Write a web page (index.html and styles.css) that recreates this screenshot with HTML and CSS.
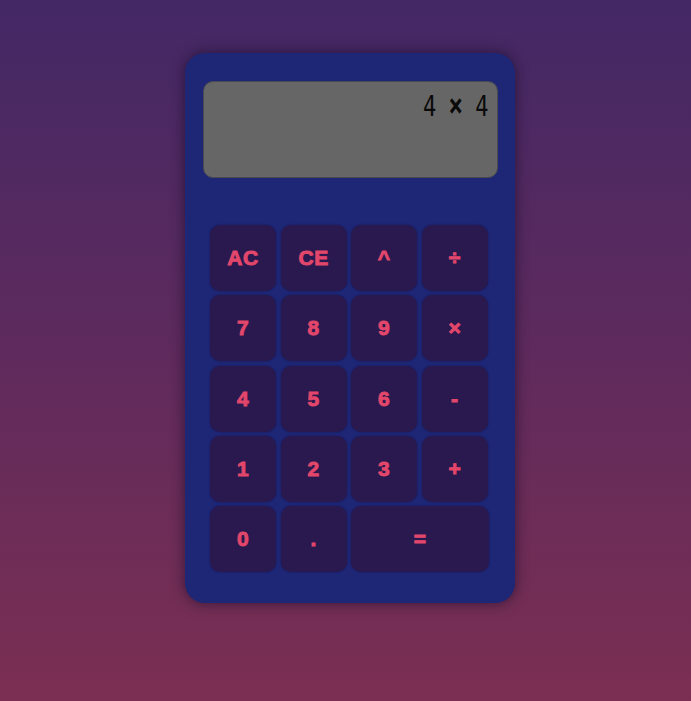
FILE: index.html
```html
<!DOCTYPE html>
<html>
<head>
<meta charset="utf-8">
<link rel="stylesheet" href="styles.css">
</head>
<body>
<div class="calc">
  <div class="display"><span class="expr">4 <b class="op">×</b> 4</span></div>
  <div class="keys">
    <button class="key">AC</button>
    <button class="key">CE</button>
    <button class="key">^</button>
    <button class="key">÷</button>
    <button class="key">7</button>
    <button class="key">8</button>
    <button class="key">9</button>
    <button class="key">×</button>
    <button class="key">4</button>
    <button class="key">5</button>
    <button class="key">6</button>
    <button class="key">-</button>
    <button class="key">1</button>
    <button class="key">2</button>
    <button class="key">3</button>
    <button class="key">+</button>
    <button class="key">0</button>
    <button class="key">.</button>
    <button class="key key-wide">=</button>
  </div>
</div>
</body>
</html>
```
FILE: styles.css
```css
html, body {
  margin: 0;
  height: 100%;
}
body {
  background: linear-gradient(180deg, #432865 0%, #5c2a5e 45%, #7b2f52 100%);
  overflow: hidden;
}
.calc {
  box-sizing: border-box;
  width: 330px;
  height: 550px;
  margin: 53px 0 0 185px;
  padding: 28px 17px 0 18px;
  background: #1e2676;
  border-radius: 20px;
  box-shadow: 0 0 14px rgba(20, 10, 40, 0.65);
}
.display {
  box-sizing: border-box;
  height: 97px;
  background: #666666;
  border: 1px solid #4a4a52;
  border-radius: 10px;
  display: flex;
  justify-content: flex-end;
  align-items: flex-start;
  padding: 9px 9px 0 0;
}
.expr {
  display: inline-block;
  font-family: "DejaVu Sans Mono", monospace;
  font-size: 22px;
  line-height: 22px;
  color: #0a0a0a;
  letter-spacing: -0.5px;
  transform: scaleY(1.3);
  transform-origin: top right;
}
.op {
  font-weight: 700;
  font-size: 24px;
}
.keys {
  margin: 47px 0 0 7px;
  display: grid;
  grid-template-columns: repeat(4, 66px);
  grid-auto-rows: 66px;
  column-gap: 4.6px;
  row-gap: 4.3px;
}
.key {
  border: none;
  border-radius: 10px;
  background: #29194f;
  color: #e2476b;
  font-family: "Arial Black", "Liberation Sans", sans-serif;
  font-weight: 700;
  font-size: 21px;
  -webkit-text-stroke: 0.9px #e2476b;
  letter-spacing: 0.5px;
  padding: 0;
  box-shadow: 0 0 2px rgba(10, 5, 30, 0.4);
}
.key-wide {
  grid-column: span 2;
  width: 138px;
}
```
